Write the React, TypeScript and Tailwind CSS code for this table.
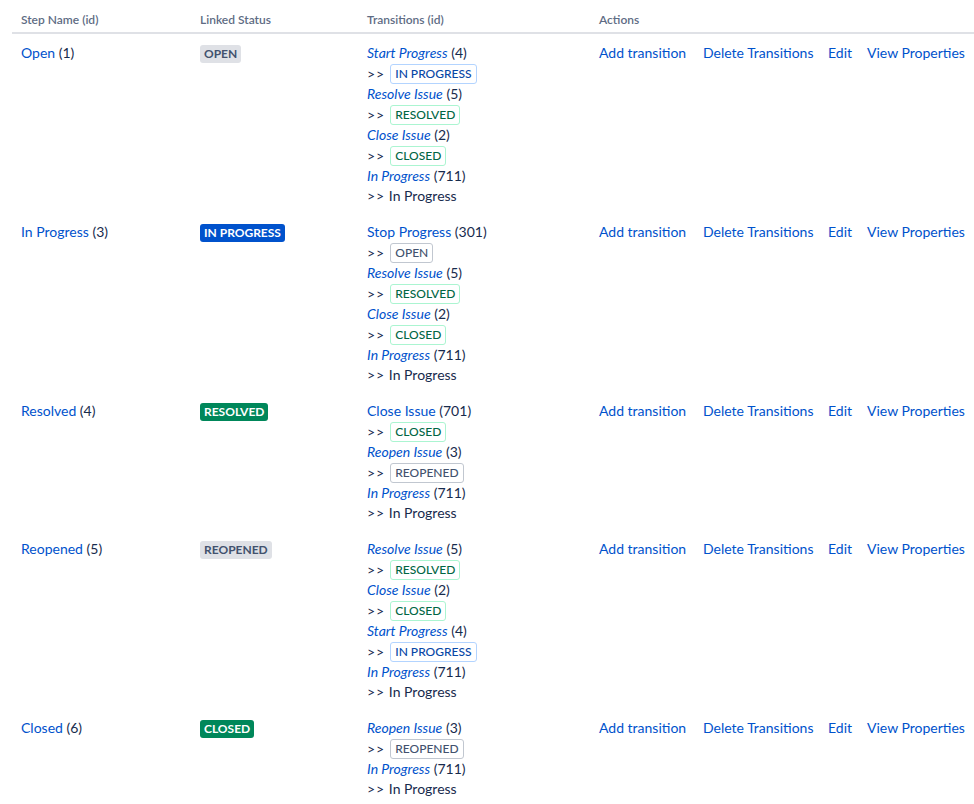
import React from "react";

type Tone = "default" | "progress" | "success";

type Transition = {
  name: string;
  id: number;
  italic?: boolean;
  target?: { label: string; tone: Tone };
  plainTarget?: string;
};

type Step = {
  name: string;
  id: number;
  status: { label: string; tone: Tone };
  transitions: Transition[];
};

const inProgressLoop: Transition = {
  name: "In Progress",
  id: 711,
  italic: true,
  plainTarget: "In Progress",
};

const STEPS: Step[] = [
  {
    name: "Open",
    id: 1,
    status: { label: "OPEN", tone: "default" },
    transitions: [
      { name: "Start Progress", id: 4, italic: true, target: { label: "IN PROGRESS", tone: "progress" } },
      { name: "Resolve Issue", id: 5, italic: true, target: { label: "RESOLVED", tone: "success" } },
      { name: "Close Issue", id: 2, italic: true, target: { label: "CLOSED", tone: "success" } },
      inProgressLoop,
    ],
  },
  {
    name: "In Progress",
    id: 3,
    status: { label: "IN PROGRESS", tone: "progress" },
    transitions: [
      { name: "Stop Progress", id: 301, target: { label: "OPEN", tone: "default" } },
      { name: "Resolve Issue", id: 5, italic: true, target: { label: "RESOLVED", tone: "success" } },
      { name: "Close Issue", id: 2, italic: true, target: { label: "CLOSED", tone: "success" } },
      inProgressLoop,
    ],
  },
  {
    name: "Resolved",
    id: 4,
    status: { label: "RESOLVED", tone: "success" },
    transitions: [
      { name: "Close Issue", id: 701, target: { label: "CLOSED", tone: "success" } },
      { name: "Reopen Issue", id: 3, italic: true, target: { label: "REOPENED", tone: "default" } },
      inProgressLoop,
    ],
  },
  {
    name: "Reopened",
    id: 5,
    status: { label: "REOPENED", tone: "default" },
    transitions: [
      { name: "Resolve Issue", id: 5, italic: true, target: { label: "RESOLVED", tone: "success" } },
      { name: "Close Issue", id: 2, italic: true, target: { label: "CLOSED", tone: "success" } },
      { name: "Start Progress", id: 4, italic: true, target: { label: "IN PROGRESS", tone: "progress" } },
      inProgressLoop,
    ],
  },
  {
    name: "Closed",
    id: 6,
    status: { label: "CLOSED", tone: "success" },
    transitions: [
      { name: "Reopen Issue", id: 3, italic: true, target: { label: "REOPENED", tone: "default" } },
      inProgressLoop,
    ],
  },
];

const SOLID: Record<Tone, string> = {
  default: "bg-[#dfe1e6] text-[#42526e]",
  progress: "bg-[#0052cc] text-white",
  success: "bg-[#00875a] text-white",
};

const SUBTLE: Record<Tone, string> = {
  default: "border-[#c1c7d0] text-[#42526e]",
  progress: "border-[#b3d4ff] text-[#0747a6]",
  success: "border-[#abf5d1] text-[#006644]",
};

function Lozenge({ label, tone }: { label: string; tone: Tone }) {
  return (
    <span
      className={`inline-block rounded-[3px] px-[4px] text-[12px] leading-[18px] font-bold uppercase ${SOLID[tone]}`}
    >
      {label}
    </span>
  );
}

function SubtleLozenge({ label, tone }: { label: string; tone: Tone }) {
  return (
    <span
      className={`inline-block rounded-[3px] border px-[4px] text-[12px] leading-[18px] font-medium uppercase ${SUBTLE[tone]}`}
    >
      {label}
    </span>
  );
}

function TransitionLines({ t }: { t: Transition }) {
  return (
    <>
      <div className="h-[20px] leading-[20px]">
        <a className={`text-[#0052cc] ${t.italic ? "italic" : ""}`}>{t.name}</a> ({t.id})
      </div>
      {t.target ? (
        <div className="flex h-[21px] items-center gap-[5px]">
          <span className="tracking-[1px]">&gt;&gt;</span>
          <SubtleLozenge label={t.target.label} tone={t.target.tone} />
        </div>
      ) : (
        <div className="h-[20px] leading-[20px]">
          <span className="tracking-[1px]">&gt;&gt;</span> {t.plainTarget}
        </div>
      )}
    </>
  );
}

export default function App() {
  return (
    <div
      className="min-h-screen bg-white pl-[12px] text-[14px] text-[#172b4d]"
      style={{ fontFamily: "Lato, 'Noto Sans', sans-serif" }}
    >
      <div className="grid grid-cols-[178px_167px_232px_1fr] border-b-2 border-[#dfe1e6] text-[12px] font-semibold leading-[20px] text-[#5e6c84]">
        <div className="pt-[10px] pb-[2px] pl-[9px]">Step Name (id)</div>
        <div className="pt-[10px] pb-[2px] pl-[10px]">Linked Status</div>
        <div className="pt-[10px] pb-[2px] pl-[10px]">Transitions (id)</div>
        <div className="pt-[10px] pb-[2px] pl-[10px]">Actions</div>
      </div>

      {STEPS.map((step) => (
        <div
          key={step.id}
          className="grid grid-cols-[178px_167px_232px_1fr] pt-[9px] pb-[7px] leading-[20px]"
        >
          <div className="pl-[9px]">
            <a className="text-[#0052cc]">{step.name}</a> ({step.id})
          </div>
          <div className="pl-[10px]">
            <Lozenge label={step.status.label} tone={step.status.tone} />
          </div>
          <div className="pl-[10px]">
            {step.transitions.map((t, i) => (
              <TransitionLines key={i} t={t} />
            ))}
          </div>
          <div className="flex pl-[10px] text-[#0052cc]">
            <a className="w-[104px] shrink-0">Add transition</a>
            <a className="w-[125px] shrink-0">Delete Transitions</a>
            <a className="w-[39px] shrink-0">Edit</a>
            <a className="shrink-0">View Properties</a>
          </div>
        </div>
      ))}
    </div>
  );
}
